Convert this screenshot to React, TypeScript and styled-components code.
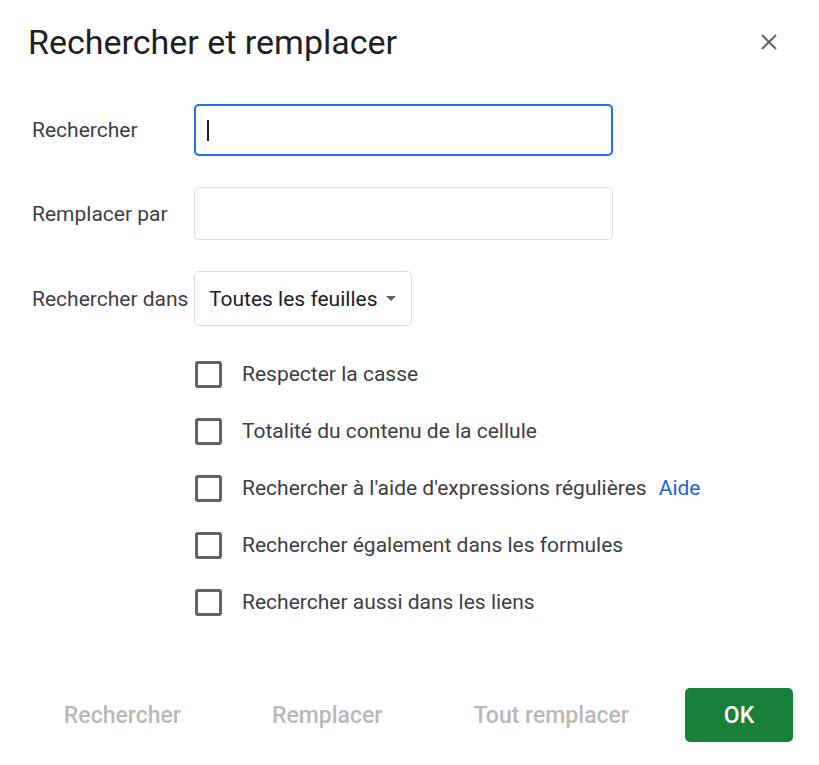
import React from "react";
import styled, { createGlobalStyle } from "styled-components";

const Global = createGlobalStyle`
  html, body { margin: 0; padding: 0; background: #fff; }
  body { font-family: Roboto, "Noto Sans", Arial, sans-serif; color: #3c4043; }
  * { box-sizing: border-box; }
`;

const Dialog = styled.div`
  width: 819px;
  height: 765px;
  display: flex;
  flex-direction: column;
  padding: 0 26px 0 28px;
`;

const Header = styled.div`
  height: 84px;
  display: flex;
  align-items: center;
  justify-content: space-between;
  padding-right: 16px;
`;

const Title = styled.h1`
  margin: 0;
  font-size: 34px;
  font-weight: 400;
  color: #202124;
  letter-spacing: 0;
`;

const CloseButton = styled.button`
  border: 0;
  background: none;
  padding: 0;
  width: 16px;
  height: 16px;
  display: flex;
  align-items: center;
  justify-content: center;
  cursor: pointer;
`;

const Form = styled.div`
  margin-top: 20px;
  padding-left: 4px;
  display: grid;
  grid-template-columns: 162px 419px;
  row-gap: 31px;
  align-items: center;
`;

const Label = styled.label`
  font-size: 21px;
  color: #3c4043;
  white-space: nowrap;
`;

const TextBox = styled.div<{ $focused?: boolean }>`
  height: ${(p) => (p.$focused ? "52px" : "53px")};
  border-radius: 5px;
  border: ${(p) => (p.$focused ? "2px solid #1a73e8" : "1px solid #dadce0")};
  display: flex;
  align-items: center;
  padding-left: 11px;
`;

const Caret = styled.span`
  width: 2px;
  height: 21px;
  background: #202124;
`;

const Select = styled.div`
  justify-self: start;
  height: 55px;
  width: 218px;
  border: 1px solid #dadce0;
  border-radius: 5px;
  display: flex;
  align-items: center;
  padding-left: 14px;
  gap: 9px;
  font-size: 21px;
  color: #202124;
  white-space: nowrap;
`;

const Arrow = styled.span`
  width: 0;
  height: 0;
  border-left: 5px solid transparent;
  border-right: 5px solid transparent;
  border-top: 5px solid #5f6368;
`;

const Options = styled.div`
  margin-top: 35px;
  padding-left: 167px;
  display: flex;
  flex-direction: column;
  gap: 31px;
`;

const OptionRow = styled.div`
  display: flex;
  align-items: center;
  height: 26px;
  gap: 20px;
  font-size: 21px;
  color: #3c4043;
  white-space: nowrap;
`;

const Box = styled.span`
  width: 27px;
  height: 27px;
  border: 3px solid #5f6368;
  border-radius: 3px;
  flex: none;
`;

const Link = styled.a`
  color: #1a66d2;
  margin-left: 12px;
  text-decoration: none;
`;

const Footer = styled.div`
  margin-top: auto;
  margin-bottom: 23px;
  display: flex;
  align-items: center;
  justify-content: flex-end;
  gap: 56px;
`;

const TextButtons = styled.div`
  display: flex;
  align-items: center;
  gap: 91px;
`;

const TextButton = styled.button`
  border: 0;
  background: none;
  font-family: inherit;
  font-size: 23px;
  font-weight: 500;
  color: #b9b9b9;
  padding: 0;
  height: 54px;
  white-space: nowrap;
`;

const OkButton = styled.button`
  border: 0;
  background: #188038;
  color: #fff;
  font-family: inherit;
  font-size: 23px;
  font-weight: 500;
  width: 108px;
  height: 54px;
  border-radius: 5px;
`;

const options = [
  "Respecter la casse",
  "Totalité du contenu de la cellule",
  "Rechercher à l'aide d'expressions régulières",
  "Rechercher également dans les formules",
  "Rechercher aussi dans les liens",
];

export default function App() {
  return (
    <>
      <Global />
      <Dialog>
        <Header>
          <Title>Rechercher et remplacer</Title>
          <CloseButton aria-label="Fermer">
            <svg width="16" height="16" viewBox="0 0 16 16">
              <path d="M1 1 L15 15 M15 1 L1 15" stroke="#5f6368" strokeWidth="2" />
            </svg>
          </CloseButton>
        </Header>
        <Form>
          <Label>Rechercher</Label>
          <TextBox $focused>
            <Caret />
          </TextBox>
          <Label>Remplacer par</Label>
          <TextBox />
          <Label>Rechercher dans</Label>
          <Select>
            Toutes les feuilles
            <Arrow />
          </Select>
        </Form>
        <Options>
          {options.map((o, i) => (
            <OptionRow key={o}>
              <Box />
              <span>
                {o}
                {i === 2 && <Link href="#">Aide</Link>}
              </span>
            </OptionRow>
          ))}
        </Options>
        <Footer>
          <TextButtons>
            <TextButton>Rechercher</TextButton>
            <TextButton>Remplacer</TextButton>
            <TextButton>Tout remplacer</TextButton>
          </TextButtons>
          <OkButton>OK</OkButton>
        </Footer>
      </Dialog>
    </>
  );
}
